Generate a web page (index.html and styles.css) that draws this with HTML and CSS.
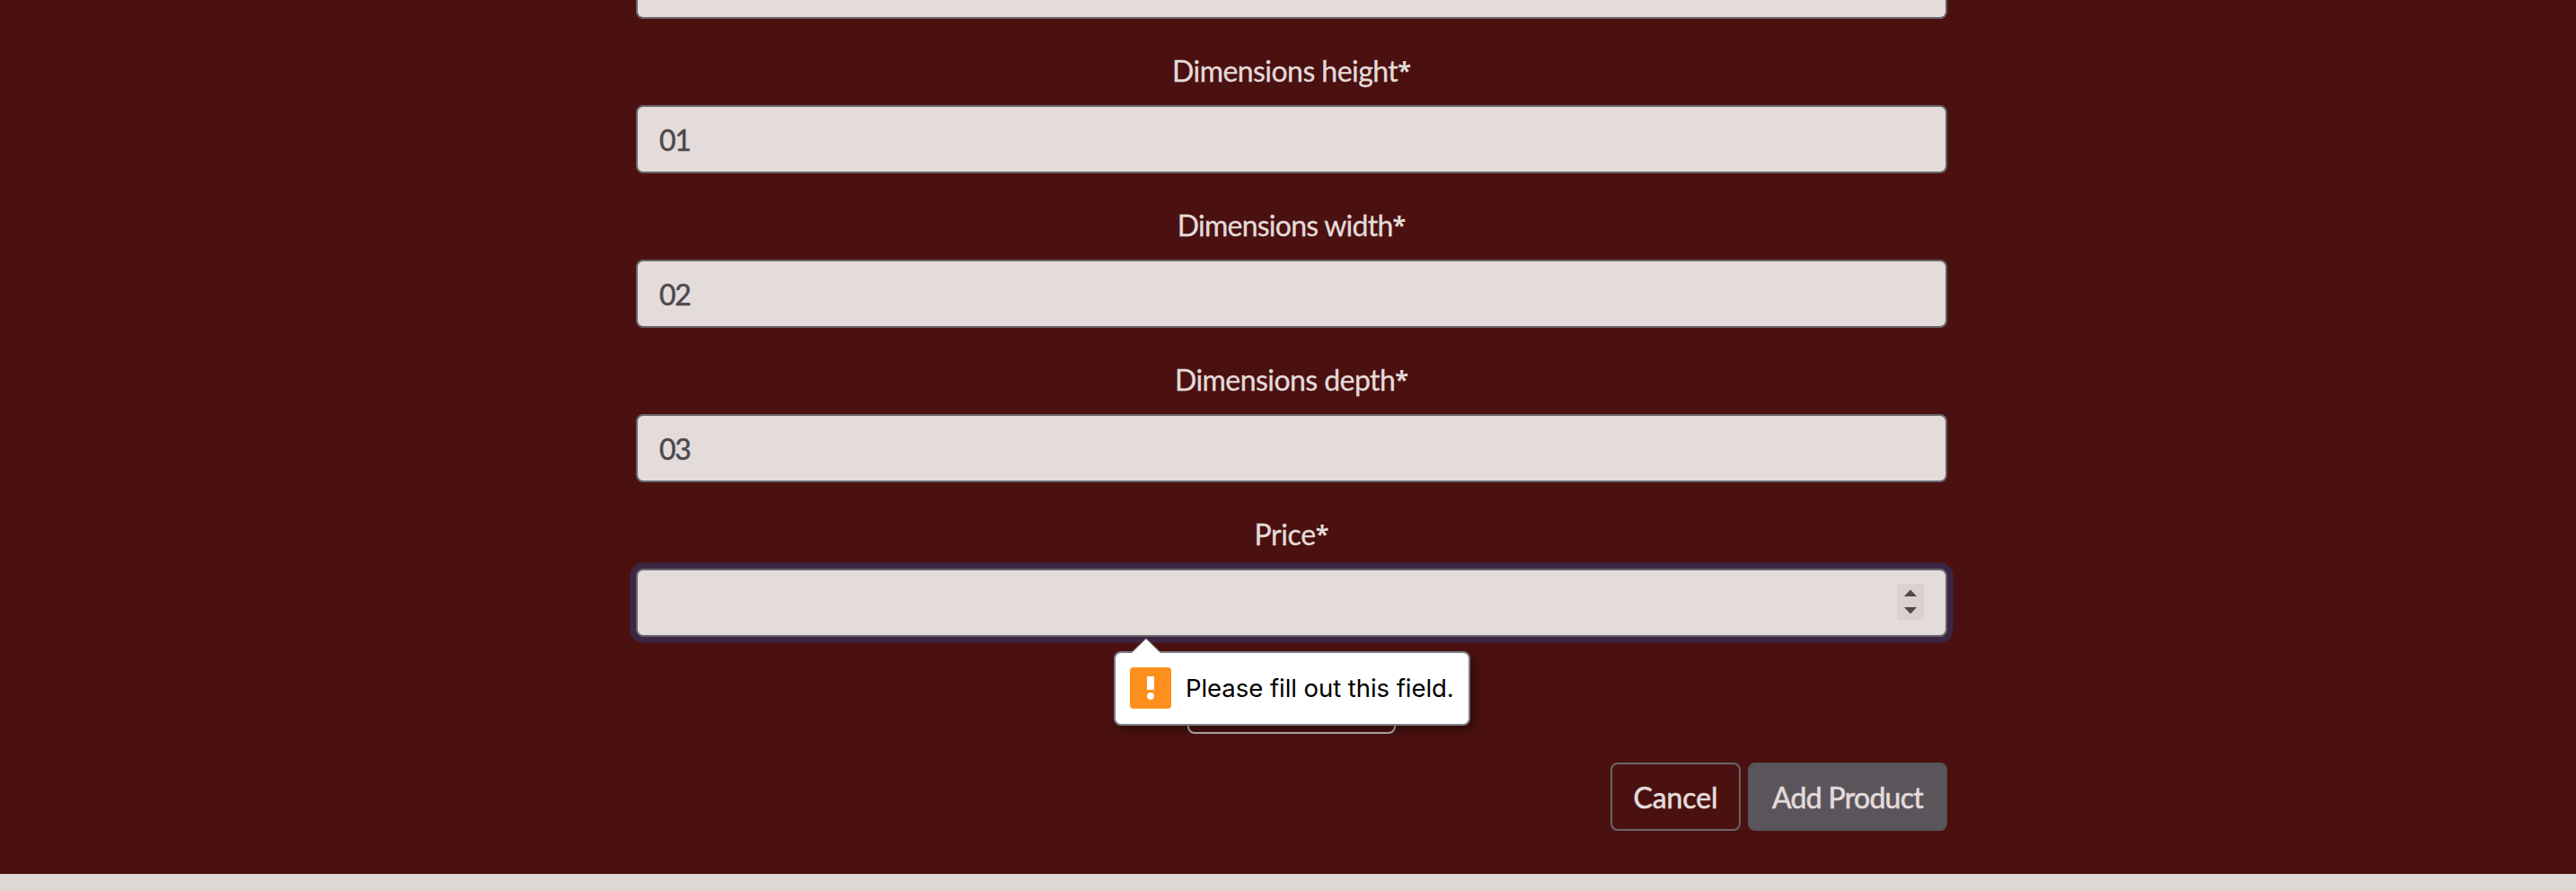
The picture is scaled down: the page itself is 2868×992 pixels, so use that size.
FILE: index.html
```html
<!DOCTYPE html>
<html lang="en">
<head>
<meta charset="utf-8">
<title>Add Product</title>
<link rel="stylesheet" href="styles.css">
</head>
<body>
<main class="form">
  <div class="control control-clipped"></div>
  <label class="label">Dimensions height<span class="req">*</span></label>
  <div class="control">01</div>
  <label class="label label-width">Dimensions width<span class="req">*</span></label>
  <div class="control">02</div>
  <label class="label">Dimensions depth<span class="req">*</span></label>
  <div class="control">03</div>
  <label class="label label-price">Price<span class="req">*</span></label>
  <div class="control control-focus">
    <span class="spinner">
      <svg width="30" height="40" viewBox="0 0 30 40"><path d="M8 14 15 6.500 22 14zM8 26l7 7.500 7-7.500z" fill="#504746"/></svg>
    </span>
    <div class="tooltip">
      <svg class="arrow" width="36" height="18" viewBox="0 0 36 18"><path d="M1 18 18 1 35 18z" fill="#fff"/><path d="M1 17 18 .7 35 17" fill="none" stroke="#777c7d" stroke-width="1"/></svg>
      <svg class="warn" width="46" height="46" viewBox="0 0 46 46"><rect width="46" height="46" rx="4" fill="#ff8f1c"/><path d="M19 10h8v15h-8z" fill="#fff"/><circle cx="23" cy="32" r="3.900" fill="#fff"/></svg>
      <span class="message">Please fill out this field.</span>
    </div>
  </div>
  <div class="upload"></div>
  <div class="actions">
    <button class="btn btn-cancel">Cancel</button>
    <button class="btn btn-add">Add Product</button>
  </div>
</main>
</body>
</html>
```
FILE: styles.css
```css
* { box-sizing: border-box; }
body {
  margin: 0;
  min-height: 992px;
  background: #ded8d7;
  font: 32px/48px Lato, sans-serif;
  overflow: hidden;
}
.form {
  height: 973px;
  padding: 0 700px 48px 708px;
  background: #4a1110;
  display: flex;
  flex-direction: column;
}
.control {
  position: relative;
  height: 76px;
  flex: none;
  padding: 13px 24px 11px;
  border: 2px solid #68656a;
  border-radius: 8px;
  background: #e4dbdb;
  color: #4b484e;
  letter-spacing: -1.3px;
  -webkit-text-stroke: .5px;
}
.control-clipped {
  height: 21px;
  padding: 0;
  border-top: 0;
  border-radius: 0 0 8px 8px;
}
.label {
  margin: 34px 0 14px;
  text-align: center;
  color: #e4dbdb;
  letter-spacing: -0.55px;
  -webkit-text-stroke: .3px;
}
.label-width { letter-spacing: -0.75px; }
.label-price { letter-spacing: -0.4px; }
.req {
  font: 700 27px/0 "Open Sans", sans-serif;
  letter-spacing: 0;
  vertical-align: 3px;
  -webkit-text-stroke: 0;
}
.control-focus {
  display: flex;
  justify-content: flex-end;
  align-items: flex-start;
  box-shadow: 0 0 0 6.500px #3c2643;
  -webkit-text-stroke: 0;
}
.spinner {
  width: 30px;
  height: 40px;
  margin-top: 2px;
  background: #d9d0cf;
  display: flex;
}
.tooltip {
  position: absolute;
  left: 530px;
  top: 90px;
  width: 397px;
  height: 83px;
  padding: 0 16px 1px;
  display: flex;
  align-items: center;
  gap: 16px;
  background: #fff;
  border: 2px solid #777c7d;
  border-radius: 8px;
  box-shadow: 5px 6px 10px rgba(0, 0, 0, .3);
  color: #000;
  z-index: 1;
}
.arrow {
  position: absolute;
  left: 16px;
  top: -17px;
}
.warn { flex: none; }
.message {
  font: 27.500px/32px Inter, sans-serif;
  letter-spacing: -0.05px;
  white-space: nowrap;
}
.upload {
  flex: none;
  width: 232px;
  height: 76px;
  margin: 32px 0 32px 614px;
  border: 2px solid #bbb0b0;
  border-radius: 8px;
}
.actions {
  display: flex;
  justify-content: flex-end;
  gap: 8px;
}
.btn {
  height: 76px;
  padding: 13px 0 11px;
  border: 2px solid #68656a;
  border-radius: 8px;
  background: none;
  color: #e4dbdb;
  font: inherit;
  -webkit-text-stroke: .6px;
  white-space: nowrap;
}
.btn-cancel { width: 145px; letter-spacing: -0.1px; }
.btn-add {
  width: 222px;
  background: #5a555b;
  border-color: #565359;
  letter-spacing: -0.7px;
}
```
